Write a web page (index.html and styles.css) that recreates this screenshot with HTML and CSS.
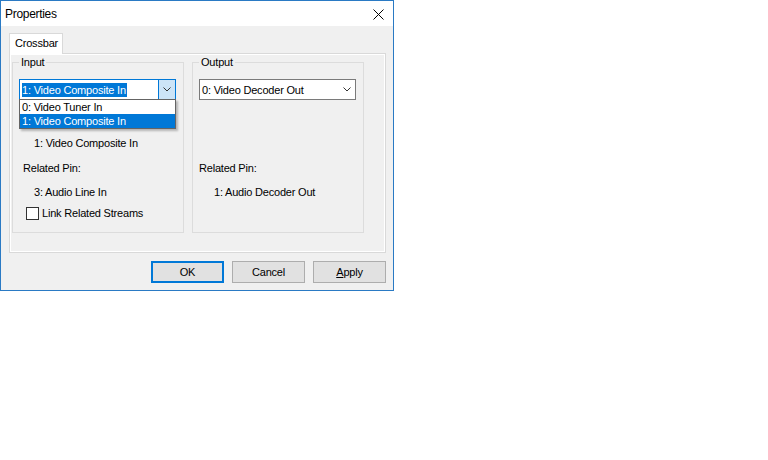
FILE: index.html
```html
<!DOCTYPE html>
<html>
<head>
<meta charset="utf-8">
<title>Properties</title>
<link rel="stylesheet" href="styles.css">
</head>
<body>
<div class="window">
  <div class="titlebar">
    <span class="title">Properties</span>
    <svg class="close" width="11" height="11" viewBox="0 0 11 11"><path d="M0.5 0.5L10.5 10.5M10.5 0.5L0.5 10.5" stroke="#000" stroke-width="1" fill="none"/></svg>
  </div>
  <div class="body">
    <div class="tabs"><div class="tab">Crossbar</div></div>
    <div class="panel">
      <div class="group">
        <span class="legend">Input</span>
        <div class="combo combo-open">
          <span class="combo-text"><span class="sel">1: Video Composite In</span></span>
          <span class="combo-btn"><svg width="8" height="5" viewBox="0 0 8 5"><path d="M0.5 0.5L4 4L7.5 0.5" stroke="#333" fill="none"/></svg></span>
          <ul class="dropdown">
            <li class="item">0: Video Tuner In</li>
            <li class="item item-active">1: Video Composite In</li>
          </ul>
        </div>
        <div class="line indent first">1: Video Composite In</div>
        <div class="line label">Related Pin:</div>
        <div class="line indent next">3: Audio Line In</div>
        <div class="check"><span class="box"></span><span>Link Related Streams</span></div>
      </div>
      <div class="group">
        <span class="legend">Output</span>
        <div class="combo">
          <span class="combo-text">0: Video Decoder Out</span>
          <span class="combo-btn plain"><svg width="8" height="5" viewBox="0 0 8 5"><path d="M0.5 0.5L4 4L7.5 0.5" stroke="#333" fill="none"/></svg></span>
        </div>
        <div class="line label out-label">Related Pin:</div>
        <div class="line indent next">1: Audio Decoder Out</div>
      </div>
    </div>
    <div class="buttons">
      <button class="btn btn-default">OK</button>
      <button class="btn">Cancel</button>
      <button class="btn"><u>A</u>pply</button>
    </div>
  </div>
</div>
</body>
</html>
```
FILE: styles.css
```css
html, body {
  margin: 0;
  padding: 0;
  background: #ffffff;
}
body {
  font-family: "Liberation Sans", Arial, sans-serif;
  font-size: 11px;
  letter-spacing: -0.2px;
  color: #000;
}
.window {
  width: 394px;
  height: 291px;
  box-sizing: border-box;
  border: 1px solid #2a7ac4;
  display: flex;
  flex-direction: column;
}
.titlebar {
  height: 25px;
  flex: none;
  background: #fff;
  display: flex;
  align-items: center;
}
.title {
  font-size: 12px;
  letter-spacing: -0.3px;
  padding-left: 4px;
}
.close {
  margin-left: auto;
  margin-right: 9px;
  margin-top: 1px;
}
.body {
  flex: 1;
  background: #f0f0f0;
  padding: 7px 7px 0 8px;
  display: flex;
  flex-direction: column;
}
.tabs {
  display: flex;
  position: relative;
  z-index: 1;
  margin-bottom: -1px;
}
.tab {
  width: 54px;
  height: 21px;
  box-sizing: border-box;
  border: 1px solid #d9d9d9;
  border-bottom: none;
  background: #fff;
  padding: 1px 0 0 5px;
  line-height: 17px;
}
.panel {
  width: 377px;
  height: 200px;
  box-sizing: border-box;
  border: 1px solid #d9d9d9;
  box-shadow: inset 0 0 0 1px #fff;
  padding: 8px 0 0 2px;
  display: flex;
  gap: 8px;
}
.group {
  position: relative;
  width: 172px;
  height: 171px;
  box-sizing: border-box;
  border: 1px solid #dcdcdc;
  padding: 16px 0 0 6px;
  display: flex;
  flex-direction: column;
}
.legend {
  position: absolute;
  top: -7px;
  left: 6px;
  padding: 0 2px;
  line-height: 13px;
  background: #f0f0f0;
}
.combo {
  position: relative;
  width: 157px;
  height: 21px;
  box-sizing: border-box;
  border: 1px solid #7a7a7a;
  background: #fff;
  display: flex;
  align-items: stretch;
  flex: none;
}
.combo-open {
  border-color: #0078d7;
}
.combo-text {
  flex: 1;
  display: flex;
  align-items: center;
  padding-left: 2px;
  white-space: nowrap;
}
.sel {
  background: #0078d7;
  color: #fff;
  line-height: 14px;
  padding-right: 1px;
}
.combo-btn {
  width: 17px;
  box-sizing: border-box;
  background: #cce4f7;
  border-left: 1px solid #0078d7;
  display: flex;
  align-items: center;
  justify-content: center;
}
.combo-btn.plain {
  background: transparent;
  border-left: none;
}
.dropdown {
  position: absolute;
  top: 19px;
  left: -1px;
  width: 157px;
  box-sizing: border-box;
  margin: 0;
  padding: 0;
  list-style: none;
  background: #fff;
  border: 1px solid #646464;
  box-shadow: 2px 2px 2px rgba(0, 0, 0, 0.25);
  z-index: 2;
}
.item {
  height: 14px;
  line-height: 14px;
  padding-left: 2px;
  white-space: nowrap;
}
.item-active {
  background: #0078d7;
  color: #fff;
}
.line {
  line-height: 13px;
  white-space: nowrap;
}
.indent {
  padding-left: 15px;
}
.label {
  padding-left: 4px;
  margin-top: 12px;
}
.first {
  margin-top: 37px;
}
.next {
  margin-top: 11px;
}
.out-label {
  padding-left: 0;
  margin-top: 62px;
}
.check {
  margin-top: 8px;
  padding-left: 7px;
  display: flex;
  align-items: center;
  height: 13px;
  line-height: 13px;
  gap: 3px;
}
.box {
  width: 13px;
  height: 13px;
  box-sizing: border-box;
  border: 1px solid #333;
  background: #fff;
}
.buttons {
  margin-top: 8px;
  width: 377px;
  display: flex;
  justify-content: flex-end;
  gap: 8px;
}
.btn {
  width: 73px;
  height: 22px;
  box-sizing: border-box;
  border: 1px solid #adadad;
  background: #e1e1e1;
  font-family: "Liberation Sans", Arial, sans-serif;
  font-size: 11px;
  letter-spacing: -0.2px;
  color: #000;
  padding: 0;
}
.btn-default {
  border: 2px solid #0078d7;
}
```
